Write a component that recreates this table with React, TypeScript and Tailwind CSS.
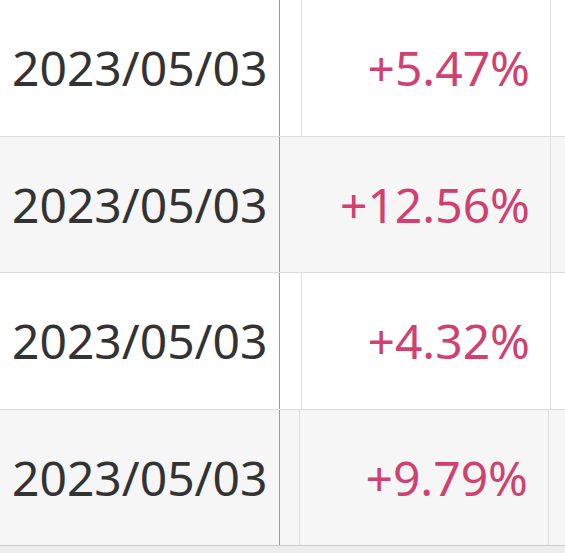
import React from 'react';

// each row: date, change, widths of the scrolled cells
const rows = [
  { date: '2023/05/03', change: '+5.47%', gap: 22, gapBorder: true, cell: 249, bg: 'bg-white', h: 'h-[137px]' },
  { date: '2023/05/03', change: '+12.56%', gap: 22, gapBorder: false, cell: 249, bg: 'bg-[#f6f6f6]', h: 'h-[136px]' },
  { date: '2023/05/03', change: '+4.32%', gap: 22, gapBorder: true, cell: 249, bg: 'bg-white', h: 'h-[137px]' },
  { date: '2023/05/03', change: '+9.79%', gap: 20, gapBorder: true, cell: 249, bg: 'bg-[#f6f6f6]', h: 'h-[136px]' },
];

const App = () => {
  return (
    <div
      className="w-[565px] h-[553px] overflow-hidden bg-[#ededed]"
      style={{ fontFamily: '"Noto Sans", "Noto Sans CJK JP", sans-serif' }}
    >
      {rows.map((row, i) => (
        <div
          key={i}
          className={`flex ${row.h} ${row.bg} border-b ${i === rows.length - 1 ? 'border-[#cccccc]' : 'border-[#dddddd]'}`}
        >
          <div className="w-[280px] shrink-0 flex items-center pl-[12px] border-r border-[#999999] text-[48px] text-[#333333] leading-none">
            {row.date}
          </div>
          <div
            className={`shrink-0 ${row.gapBorder ? 'border-r border-[#dddddd]' : ''}`}
            style={{ width: row.gap }}
          />
          <div
            className="shrink-0 flex items-center justify-end pr-[20px] border-r border-[#dddddd] text-[48px] text-[#d0416f] leading-none"
            style={{ width: row.cell }}
          >
            {row.change}
          </div>
          <div className="flex-1" />
        </div>
      ))}
    </div>
  );
};

export default App;
